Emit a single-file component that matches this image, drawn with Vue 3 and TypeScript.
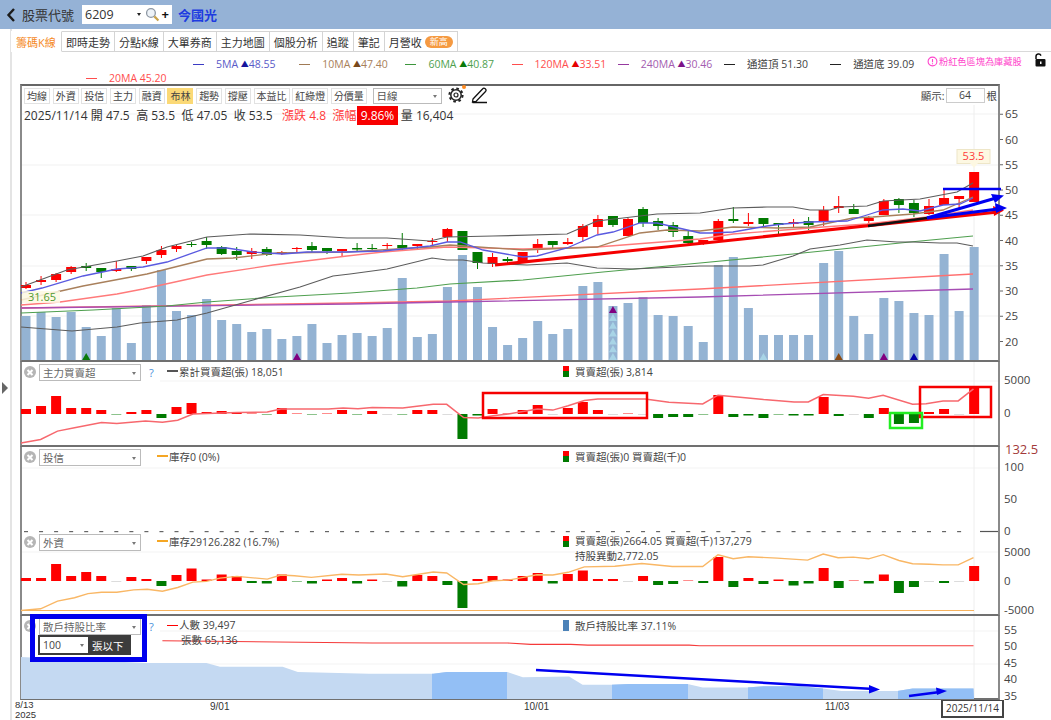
<script setup lang="ts">
type Candle = [string, number, number, number, number];

const cx = (i: number) => 26 + 15.05 * i;
const RED = '#ff0000';
const GREEN = '#007a00';

// colour, body top, body bottom, wick top, wick bottom (page px)
const candles: Candle[] = [
  ['r', 285, 288, 282, 289], ['r', 280, 282, 276, 285], ['r', 274, 280, 273, 282], ['r', 267, 272, 266, 274],
  ['g', 266, 268, 263, 271], ['g', 268, 272, 268, 278], ['r', 269, 271, 261, 272], ['g', 266, 269, 266, 271],
  ['r', 257, 261, 257, 264], ['r', 250, 255, 246, 258], ['r', 246, 249, 245, 252], ['g', 244, 245, 242, 247],
  ['g', 241, 245, 237, 249], ['g', 247, 254, 246, 255], ['g', 251, 255, 247, 260], ['r', 251, 254, 248, 259],
  ['g', 249, 255, 247, 256], ['r', 252, 254, 251, 255], ['r', 248, 249, 247, 253], ['g', 246, 250, 242, 253],
  ['g', 248, 251, 248, 254], ['r', 249, 251, 249, 257], ['g', 248, 249.5, 243, 252], ['g', 248, 249, 244, 252],
  ['r', 245, 246, 243, 251], ['g', 245, 248, 233, 250], ['r', 244, 246, 244, 250], ['r', 241, 242, 238, 246],
  ['r', 229, 237, 228, 242], ['g', 231, 250, 231, 250], ['g', 252, 263, 252, 269], ['r', 257, 264, 253, 267],
  ['g', 259, 261, 257, 265], ['r', 252, 262, 252, 263], ['r', 244, 250, 239, 253], ['g', 241, 245, 241, 248],
  ['r', 242, 244, 238, 245], ['r', 226, 237, 224, 242], ['r', 219, 227, 215, 234], ['g', 216, 225, 216, 227],
  ['r', 219, 236, 218, 236], ['g', 209, 223, 207, 227], ['g', 221, 226, 218, 230], ['g', 225, 232, 222, 237],
  ['g', 236, 243, 230, 244], ['r', 240, 244, 240, 245], ['r', 221, 240, 219, 240], ['g', 219, 221, 207, 223],
  ['r', 222, 224, 213, 226], ['g', 218, 224, 218, 227], ['g', 223, 225, 223, 234], ['r', 222, 224, 219, 227],
  ['g', 221, 225, 217, 230], ['r', 210, 222, 206, 226], ['r', 206, 208, 196, 213], ['g', 209, 214, 204, 214],
  ['r', 218, 221, 216, 223], ['r', 201, 215, 199, 215], ['g', 199, 205, 198, 213], ['g', 203, 213, 200, 217],
  ['r', 206, 214, 199, 215], ['r', 198, 205, 190, 205], ['r', 196, 199, 196, 208], ['r', 172, 202, 172, 202],
];

const volumes = [
  316, 312, 317, 312, 327, 336, 308, 343, 305, 270, 311, 315, 299, 320, 324, 332,
  329, 339, 336, 324, 343, 335, 333, 336, 328, 278, 337, 334, 287, 255, 287, 327,
  345, 338, 321, 334, 329, 286, 282, 306, 303, 297, 315, 316, 326, 342, 265, 257,
  308, 335, 335, 335, 335, 263, 251, 316, 334, 298, 301, 313, 315, 254, 311, 247,
];

const lines = [
  { color: '#ff7070', w: 1.3, d: '21,308 350,303 450,301 700,289 973,274' },
  { color: '#a64db3', w: 1.3, d: '21,308 350,304 450,302 700,297 973,289' },
  { color: '#4f9f4f', w: 1.2, d: '21,313 93,310 167,306 207,302 277,297 350,293 417,288 450,284 523,280 603,272 700,263 793,254 910,242 973,236' },
  { color: '#ff7a7a', w: 1.3, d: '21,305 60,302 117,294 143,289 207,275 273,265 347,256 383,252 447,247 523,249 597,247 700,239 733,234 823,227 867,224 927,217 973,210' },
  { color: '#a9805c', w: 1.3, d: '21,300 83,286 147,274 207,259 233,258 277,253 347,252 430,247 450,245 523,250 597,247 640,233 667,230 700,231 733,227 777,228 810,227 853,218 873,217 913,214 943,210 973,197' },
  { color: '#5a5ae0', w: 1.3, d: '21,293 42,288 83,276 117,269 143,267 167,262 207,248 227,248 253,252 283,254 307,252 347,252 383,251 430,246 447,242 460,242 483,250 523,257 537,256 567,248 597,235 613,232 640,223 657,223 683,229 700,233 710,233 733,232 767,226 783,224 810,222 847,221 867,215 883,210 903,209 920,211 943,205 960,204 973,198' },
  { color: '#5c5c5c', w: 1.2, d: '21,287 67,270 117,261 143,256 167,247 207,237 250,234 300,235 347,238 387,238 430,241 447,237 493,236 567,234 597,221 623,218 657,214 700,213 733,208 767,207 793,207 810,210 830,210 840,207 867,206 883,201 920,199 957,192 973,183' },
  { color: '#5c5c5c', w: 1.2, d: '21,327 72,331 117,327 140,323 177,320 207,313 253,300 300,287 333,276 350,274 387,269 432,258 447,260 463,260 483,263 527,265 567,263 597,268 633,269 700,266 750,266 763,265 793,256 810,249 840,245 867,240 897,242 913,242 940,243 957,243 973,246' },
];

const marks = [
  { x: cx(4), y: 360, c: '#0a7a0a' }, { x: cx(18), y: 360, c: '#800080' }, { x: cx(49), y: 360, c: '#a8d4e6' },
  { x: cx(54), y: 360, c: '#8a4b14' }, { x: cx(57), y: 360, c: '#800080' }, { x: cx(59), y: 360, c: '#0000a8' },
  ...[0, 1, 2, 3, 4, 5].map((n) => ({ x: cx(39), y: 360 - n * 7.8, c: '#a8d4e6' })),
  { x: cx(39), y: 313, c: '#800080' },
];
const tri = (m: { x: number; y: number }) => `${m.x - 4},${m.y} ${m.x + 4},${m.y} ${m.x},${m.y - 7}`;

// net buy/sell bars, px above the zero line; under 1px is drawn as a faint dash
const mainForce = [
  5, 8, 18, 6, 6, 4, -0.5, 2, 4, -4, 7, 11, 2, 3, 2, 0.5, -0.5, 6, 0.5, -0.5, 0.5, 4, -0.5, 3, 0, -0.5, 4, 4, 0, -25, -1.5, 5,
  0.5, 4, 9, 0, 6, 12, 4, 0, 0.5, 0, -4, -3, -3, -0.5, 19, -3, -1.5, -4, -0.5, -1.5, -1.5, 17, -2, 0, -4, 6, -10, -9, 2, 5, 0, 27,
];
const foreign = [
  3, 3, 17, 5, 9, 5, 0, 4, 2, -5, 6, 12.5, 1.5, 6.5, 5, -2, -2.5, 6.5, -0.5, -2.5, 1.5, 3, -2.5, 1.5, 0, -5.5, 6, 5, -4, -27, 2, 5,
  1.5, 5, 8, -2.5, 7, 10.5, 2, 2, 0, 5, -4, -3, 0.5, -2, 24, -6, 3, -3, 1.5, -4.5, -2.5, 13, -7, 0.5, -2.5, 6.5, -12, -6, 0, -2, 0, 15,
];
const bars = (vals: number[], zero: number) =>
  vals.map((v, i) => {
    const h = Math.max(Math.abs(v), 1);
    return {
      x: cx(i) - 5,
      y: v > 0 ? zero - h : zero,
      h,
      fill: v === 0 ? '#dcdcdc' : v > 0 ? RED : GREEN,
      o: v !== 0 && Math.abs(v) < 1 ? 0.45 : 1,
    };
  });
const mainBars = bars(mainForce, 414);
const foreignBars = bars(foreign, 581);

// line points measured off the enlarged crops, converted back to page px
const S = 2.955;
const conv = (pts: number[], ox: number, oy: number) => {
  const out: string[] = [];
  for (let i = 0; i < pts.length; i += 2) out.push(`${(ox + pts[i] / S).toFixed(1)},${(oy + pts[i + 1] / S).toFixed(1)}`);
  return out.join(' ');
};
const cumLine =
  conv([62, 245, 120, 235, 170, 210, 220, 200, 300, 185, 345, 188, 430, 180, 480, 184, 525, 178, 570, 160, 700, 155, 790, 154, 830, 145, 970, 145, 1014, 142, 1058, 144, 1100, 140, 1190, 142, 1280, 131, 1320, 131, 1370, 170, 1413, 171, 1457, 165, 1502, 160], 0, 360) +
  ' ' +
  conv([52, 145, 97, 148, 142, 135, 190, 120, 230, 115, 370, 115, 440, 125, 540, 130, 585, 104, 650, 110, 720, 117, 810, 124, 852, 124, 896, 102, 985, 107, 1030, 113, 1073, 104, 1160, 131, 1200, 129, 1250, 121, 1295, 121, 1340, 85], 520, 360);
const holdLine =
  conv([62, 238, 120, 233, 170, 210, 220, 200, 260, 188, 300, 184, 345, 184, 395, 177, 435, 175, 480, 181, 525, 170, 570, 154, 610, 152, 650, 142, 700, 137, 790, 145, 830, 133, 870, 135, 920, 140, 1010, 131, 1060, 133, 1140, 130, 1190, 138, 1280, 124, 1320, 127, 1370, 161, 1413, 159, 1457, 150, 1502, 148], 0, 530) +
  ' ' +
  conv([10, 140, 50, 132, 97, 133, 142, 125, 190, 109, 280, 107, 360, 99, 450, 108, 540, 108, 585, 73, 630, 85, 675, 79, 760, 83, 850, 89, 896, 71, 940, 82, 985, 80, 1030, 85, 1073, 73, 1120, 90, 1160, 100, 1210, 101, 1250, 103, 1295, 103, 1340, 82], 520, 530);
const peopleLine =
  conv([480, 327, 1100, 334, 1500, 334, 1568, 338], 0, 530) + ' ' + conv([150, 338, 200, 340, 500, 340, 530, 342, 1340, 342], 520, 530);
const areaTop =
  conv([62, 375, 430, 393, 610, 393, 650, 404, 835, 404, 880, 420, 1090, 425, 1280, 425, 1320, 420, 1500, 420, 1545, 435], 0, 530) +
  ' ' +
  conv([145, 433, 185, 457, 270, 457, 320, 455, 495, 455, 540, 465, 670, 465, 720, 462, 830, 462, 895, 468, 950, 476, 1115, 476, 1160, 468, 1340, 468], 520, 530);
const areaPts = `21,699 ${areaTop} 974,699`;
const areaBands = [[432, 75], [612, 76], [748, 75], [898, 76]];

const tabs = ['即時走勢', '分點K線', '大單券商', '主力地圖', '個股分析', '追蹤', '筆記'];
const tools = ['均線', '外資', '投信', '主力', '融資', '布林', '趨勢', '撐壓', '本益比', '紅綠燈', '分價量'];

const legend = [
  { label: '5MA', up: true, val: '48.55', dash: '#3b3bc4', text: '#5a5ac8', arrow: '#15159c' },
  { label: '10MA', up: true, val: '47.40', dash: '#a07a55', text: '#a8805a', arrow: '#7a4a1c' },
  { label: '60MA', up: true, val: '40.87', dash: '#3c963c', text: '#4f9f4f', arrow: '#0a7a0a' },
  { label: '120MA', up: true, val: '33.51', dash: '#ff4d4d', text: '#ff4d4d', arrow: '#e60000' },
  { label: '240MA', up: true, val: '30.46', dash: '#96399f', text: '#a45cb0', arrow: '#7d1088' },
  { label: '通道頂', up: false, val: '51.30', dash: '#222', text: '#444', arrow: '' },
  { label: '通道底', up: false, val: '39.09', dash: '#222', text: '#444', arrow: '' },
];

const mainTicks = [65, 60, 55, 50, 45, 40, 35, 30, 25, 20];
const priceY = (p: number) => 190 + (50 - p) * 5.05;
const ticks1 = [{ t: '5000', y: 380 }, { t: '0', y: 413 }];
const ticks2 = [{ t: '100', y: 467 }, { t: '50', y: 499 }, { t: '0', y: 531 }];
const ticks3 = [{ t: '5000', y: 552 }, { t: '0', y: 581 }, { t: '-5000', y: 610 }];
const ticks4 = [{ t: '55', y: 630 }, { t: '50', y: 646 }, { t: '45', y: 663 }, { t: '40', y: 679 }, { t: '35', y: 696 }];
</script>

<template>
  <div class="page">
    <header class="topbar">
      <svg class="back" width="10" height="16" viewBox="0 0 10 16"><path d="M8 2 L2.5 8 L8 14" fill="none" stroke="#1c1c1c" stroke-width="2.4" /></svg>
      <span class="code-label">股票代號</span>
      <div class="code-box">
        <span class="code-val">6209</span>
        <i class="caret dark"></i>
        <svg width="15" height="15" viewBox="0 0 15 15">
          <circle cx="6" cy="6" r="4.4" fill="#eef3f8" stroke="#8d97a3" stroke-width="1.3" />
          <path d="M9.4 9.4 L13.5 13.5" stroke="#c9a24a" stroke-width="2.2" />
        </svg>
        <b class="plus">+</b>
      </div>
      <span class="stock-name">今國光</span>
    </header>

    <div class="body">
      <nav class="tabs">
        <span class="tab active">籌碼K線</span>
        <span v-for="t in tabs" :key="t" class="tab">{{ t }}</span>
        <span class="tab">月營收<em class="badge">新高</em></span>
      </nav>

      <div class="legend">
        <div class="legend-row">
          <span v-for="l in legend" :key="l.label" class="legend-item" :style="{ color: l.text }">
            <i class="dash" :style="{ background: l.dash }"></i>{{ l.label }}
            <span v-if="l.up" :style="{ color: l.arrow }" class="up">▲</span>{{ l.val }}
          </span>
        </div>
        <div class="legend-row second">
          <span class="legend-item" style="color: #ff4d4d"><i class="dash" style="background: #ff4d4d"></i>20MA 45.20</span>
        </div>
        <div class="note">
          <svg width="11" height="11" viewBox="0 0 12 12">
            <circle cx="6" cy="6" r="4.8" fill="none" stroke="#ff44cc" stroke-width="1.2" />
            <path d="M6 3.2 V6.8 M6 8 V9" stroke="#ff44cc" stroke-width="1.2" />
          </svg>
          粉紅色區塊為庫藏股
        </div>
        <svg class="lock" width="14" height="14" viewBox="0 0 14 14">
          <path d="M3 6 V3.6 A2.6 2.6 0 0 1 8 2.6" fill="none" stroke="#111" stroke-width="1.5" />
          <rect x="2.5" y="6" width="10" height="7.5" rx="1" fill="#111" />
          <rect x="7" y="8.5" width="1.5" height="2.5" fill="#fff" />
        </svg>
      </div>

      <section class="charts">
        <div class="row">
          <div class="panel main">
            <svg class="plot" width="976" height="274" viewBox="22 86 976 274">
              <line v-for="y in [114, 165, 215, 266, 316]" :key="y" x1="22" x2="998" :y1="y" :y2="y" stroke="#f1f1f1" />
              <line x1="974" x2="974" y1="105" y2="360" stroke="#eee" />
              <rect v-for="(v, i) in volumes" :key="i" :x="cx(i) - 4.5" :y="v" width="9" :height="360 - v" fill="#94b3d3" />
              <polygon v-for="(m, i) in marks" :key="i" :points="tri(m)" :fill="m.c" />
              <g v-for="(c, i) in candles" :key="i">
                <line :x1="cx(i)" :x2="cx(i)" :y1="c[3]" :y2="c[4]" :stroke="c[0] === 'r' ? RED : GREEN" />
                <rect :x="cx(i) - 5" :y="c[1]" width="10" :height="c[2] - c[1]" :fill="c[0] === 'r' ? RED : GREEN" />
              </g>
              <polyline v-for="l in lines" :key="l.d" :points="l.d" fill="none" :stroke="l.color" :stroke-width="l.w" />

              <line x1="495" y1="265" x2="998" y2="212" stroke="#f50000" stroke-width="3" />
              <polygon points="1004,210.5 993,206 994,216" fill="#f50000" />
              <line x1="868" y1="226" x2="927" y2="218" stroke="#111" stroke-width="2.5" />
              <line x1="943" y1="189" x2="1001" y2="189" stroke="#0000f0" stroke-width="2.5" />
              <line x1="927" y1="218" x2="996" y2="198" stroke="#0000f0" stroke-width="3" />
              <polygon points="1004,195.5 991,194 995,203" fill="#0000f0" />
              <line x1="927" y1="218" x2="998" y2="209" stroke="#0000f0" stroke-width="3" />
              <polygon points="1007,208 995,203 996,213" fill="#0000f0" />

              <g class="tag">
                <rect x="957" y="149.5" width="33" height="14" fill="#fdf8e2" stroke="#eee6c8" />
                <polygon points="970,163 978,163 974,168" fill="#fdf8e2" />
                <text x="973.5" y="160" text-anchor="middle" fill="#ff3b3b">53.5</text>
                <rect x="22" y="291" width="38" height="12" fill="#fdf8e2" opacity="0.85" />
                <text x="28" y="300.5" fill="#4f9a2e">31.65</text>
              </g>
            </svg>

            <div class="overlay">
              <div class="toolbar">
                <span v-for="t in tools" :key="t" class="tool" :class="{ on: t === '布林' }">{{ t }}</span>
                <div class="select period">日線<i class="caret"></i></div>
                <svg class="gear" width="20" height="20" viewBox="0 0 20 20">
                  <circle cx="9" cy="11" r="5.2" fill="none" stroke="#222" stroke-width="1.5" />
                  <circle cx="9" cy="11" r="6.6" fill="none" stroke="#222" stroke-width="2" stroke-dasharray="2.6 2.6" />
                  <circle cx="9" cy="11" r="2" fill="none" stroke="#222" stroke-width="1.2" />
                  <circle cx="17" cy="3" r="2" fill="#ff8a1e" />
                </svg>
                <svg class="pen" width="17" height="17" viewBox="0 0 17 17">
                  <path d="M2 12 L11.5 2 A1.6 1.6 0 0 1 14.5 4.5 L5 14.5 L1.5 15 Z M1.5 15.5 H16" fill="none" stroke="#111" stroke-width="1.3" />
                </svg>
                <div class="show">
                  顯示:<span class="show-box">64</span>根
                </div>
              </div>
              <div class="info">
                <span>2025/11/14 開 47.5</span>
                <span>高 53.5</span>
                <span>低 47.05</span>
                <span>收 53.5</span>
                <span class="rise first">漲跌 4.8</span>
                <span class="rise">漲幅</span>
                <span class="pct">9.86%</span>
                <span class="vol">量 16,404</span>
              </div>
            </div>
          </div>
          <svg class="axis" width="51" height="278" viewBox="1000 84 51 278">
            <g v-for="p in mainTicks" :key="p">
              <line x1="1000" x2="1003" :y1="priceY(p)" :y2="priceY(p)" stroke="#666" />
              <text x="1005" :y="priceY(p) + 4">{{ p }}</text>
            </g>
          </svg>
        </div>

        <div class="row">
          <div class="panel sub h85">
            <svg class="plot" width="976" height="83" viewBox="22 362 976 83">
              <line x1="160" x2="998" y1="381" y2="381" stroke="#f3f3f3" />
              <line x1="974" x2="974" y1="362" y2="445" stroke="#eee" />
              <rect v-for="(b, i) in mainBars" :key="i" :x="b.x" :y="b.y" width="10" :height="b.h" :fill="b.fill" :opacity="b.o" />
              <polyline :points="cumLine" fill="none" stroke="#f7686e" stroke-width="1.5" />
              <rect x="483" y="393" width="164" height="25" fill="none" stroke="#f50000" stroke-width="2.5" />
              <rect x="920" y="387" width="71" height="30" fill="none" stroke="#f50000" stroke-width="2.5" />
              <rect x="890" y="413" width="32" height="15" fill="none" stroke="#22ee22" stroke-width="2.5" />
            </svg>
            <div class="overlay head">
              <div class="ctrl">
                <i class="close"></i>
                <div class="select wide">主力買賣超<i class="caret"></i></div>
                <span class="help">?</span>
              </div>
              <div class="lg"><i class="ln" style="background: #555"></i>累計買賣超(張) 18,051</div>
              <div class="lg"><i class="chip"></i>買賣超(張) 3,814</div>
            </div>
          </div>
          <svg class="axis" width="51" height="85" viewBox="1000 362 51 85">
            <g v-for="t in ticks1" :key="t.t"><text x="1004" :y="t.y + 4">{{ t.t }}</text></g>
          </svg>
        </div>

        <div class="row">
          <div class="panel sub h85 open">
            <svg class="plot" width="976" height="85" viewBox="22 447 976 85">
              <line x1="22" x2="998" y1="468" y2="468" stroke="#f3f3f3" />
              <line x1="974" x2="974" y1="447" y2="532" stroke="#eee" />
              <rect v-for="i in 63" :key="i" :x="cx(i - 1) - 2" y="531" width="4" height="1.2" fill="#666" />
              <line x1="980" x2="998" y1="531.5" y2="531.5" stroke="#555" stroke-width="1.2" />
            </svg>
            <div class="overlay head">
              <div class="ctrl">
                <i class="close"></i>
                <div class="select wide">投信<i class="caret"></i></div>
              </div>
              <div class="lg narrow"><i class="ln" style="background: #f5a623"></i>庫存0 (0%)</div>
              <div class="lg"><i class="chip"></i>買賣超(張)0 買賣超(千)0</div>
            </div>
          </div>
          <svg class="axis" width="51" height="85" viewBox="1000 447 51 85">
            <text x="1005" y="454" class="peak">132.5</text>
            <g v-for="t in ticks2" :key="t.t"><text x="1004" :y="t.y + 4">{{ t.t }}</text></g>
          </svg>
        </div>

        <div class="row">
          <div class="panel sub h84">
            <svg class="plot" width="976" height="82" viewBox="22 532 976 82">
              <line x1="22" x2="998" y1="552" y2="552" stroke="#f3f3f3" />
              <line x1="974" x2="974" y1="532" y2="614" stroke="#eee" />
              <rect v-for="(b, i) in foreignBars" :key="i" :x="b.x" :y="b.y" width="10" :height="b.h" :fill="b.fill" :opacity="b.o" />
              <polyline :points="holdLine" fill="none" stroke="#f9b765" stroke-width="1.4" />
              <line x1="22" x2="974" y1="610.5" y2="610.5" stroke="#f7b35e" stroke-width="1.2" />
            </svg>
            <div class="overlay head">
              <div class="ctrl">
                <i class="close"></i>
                <div class="select wide">外資<i class="caret"></i></div>
              </div>
              <div class="lg narrow"><i class="ln" style="background: #f5a623"></i>庫存29126.282 (16.7%)</div>
              <div class="lg two">
                <span><i class="chip"></i>買賣超(張)2664.05 買賣超(千)137,279</span>
                <span class="indent">持股異動2,772.05</span>
              </div>
            </div>
          </div>
          <svg class="axis" width="51" height="84" viewBox="1000 532 51 84">
            <g v-for="t in ticks3" :key="t.t"><text x="1004" :y="t.y + 4">{{ t.t }}</text></g>
          </svg>
        </div>

        <div class="row">
          <div class="panel sub h84">
            <svg class="plot" width="976" height="82" viewBox="22 616 976 82">
              <defs>
                <clipPath id="retail"><polygon :points="areaPts" /></clipPath>
              </defs>
              <line x1="160" x2="998" y1="631" y2="631" stroke="#f3f3f3" />
              <line x1="160" x2="998" y1="664" y2="664" stroke="#f3f3f3" />
              <line x1="974" x2="974" y1="616" y2="698" stroke="#eee" />
              <polygon :points="areaPts" fill="#c4d9f2" />
              <g clip-path="url(#retail)">
                <rect v-for="b in areaBands" :key="b[0]" :x="b[0]" y="640" :width="b[1]" height="60" fill="#93bff5" />
              </g>
              <polyline :points="peopleLine" fill="none" stroke="#f53a3a" stroke-width="1.1" />
              <line x1="536" y1="670" x2="874" y2="689" stroke="#0000f0" stroke-width="2.5" />
              <polygon points="880,689.5 869,685 869,693.5" fill="#0000f0" />
              <line x1="909" y1="696" x2="940" y2="692" stroke="#0000f0" stroke-width="2.5" />
              <polygon points="947,691 936,687.5 937,695" fill="#0000f0" />
            </svg>
            <div class="overlay head">
              <div class="ctrl">
                <i class="close"></i>
                <div class="select wide">散戶持股比率<i class="caret"></i></div>
                <span class="help">?</span>
              </div>
              <div class="lg two">
                <span><i class="ln" style="background: #f00"></i>人數 39,497</span>
                <span class="indent-s">張數 65,136</span>
              </div>
              <div class="lg"><i class="chip blue"></i>散戶持股比率 37.11%</div>
            </div>
            <div class="callout">
              <div class="sub-filter">
                <div class="select small">100<i class="caret"></i></div>
                <span>張以下</span>
              </div>
            </div>
          </div>
          <svg class="axis" width="51" height="84" viewBox="1000 616 51 84">
            <g v-for="t in ticks4" :key="t.t"><text x="1004" :y="t.y + 4">{{ t.t }}</text></g>
          </svg>
        </div>

        <div class="dates">
          <span class="date d0">8/13<br />2025</span>
          <span class="date d1">9/01</span>
          <span class="date d2">10/01</span>
          <span class="date d3">11/03</span>
          <span class="cursor-date">2025/11/14</span>
        </div>
      </section>
    </div>

    <i class="side-arrow"></i>
  </div>
</template>

<style>
html,
body {
  margin: 0;
  background: #fff;
}
</style>

<style scoped>
.page {
  position: relative;
  width: 1051px;
  height: 720px;
  overflow: hidden;
  background: #fff;
  font-family: 'Open Sans', 'Noto Sans CJK TC', sans-serif;
  color: #333;
}
.topbar {
  display: flex;
  align-items: center;
  height: 29px;
  background: #95b2d6;
  padding-left: 6px;
}
.back {
  margin-right: 6px;
}
.code-label {
  font-size: 13px;
  color: #333;
  width: 60px;
}
.code-box {
  display: flex;
  align-items: center;
  width: 90px;
  height: 19px;
  background: #fff;
  box-sizing: border-box;
  padding: 0 3px;
  font-size: 12.5px;
}
.code-val {
  width: 52px;
}
.code-box .caret {
  margin-right: 4px;
}
.plus {
  margin-left: 2px;
  font-size: 13px;
  line-height: 1;
  color: #111;
}
.stock-name {
  margin-left: 6px;
  font-size: 13px;
  font-weight: 700;
  color: #1d3be0;
}
.caret {
  display: inline-block;
  width: 0;
  height: 0;
  border: 2.5px solid transparent;
  border-top: 3px solid #777;
  border-bottom: 0;
}
.caret.dark {
  border-top-color: #222;
}

.body {
  margin-left: 10px;
  border-left: 2px solid #e4e4e4;
  height: 691px;
}
.tabs {
  display: flex;
  margin-left: -1px;
  padding-top: 2px;
  height: 20px;
  border-bottom: 1px solid #d9d9d9;
}
.tab {
  display: flex;
  align-items: center;
  box-sizing: border-box;
  height: 21px;
  padding: 0 4px;
  font-size: 11px;
  color: #333;
  border: 1px solid #d4d4d4;
  border-left: 0;
  background: #fff;
}
.tab.active {
  color: #f58a1f;
  border-left: 1px solid #fff;
  border-bottom-color: #fff;
  border-top-color: #fff;
  width: 51px;
}
.badge {
  margin-left: 3px;
  padding: 0 5px;
  height: 12px;
  line-height: 12px;
  border-radius: 6px;
  background: #f59a42;
  color: #fff;
  font-size: 9px;
  font-style: normal;
}

.legend {
  position: relative;
  height: 32px;
  font-size: 10.5px;
}
.legend-row {
  display: flex;
  height: 14px;
  padding-top: 5px;
  padding-left: 181px;
  line-height: 14px;
}
.legend-row.second {
  padding-top: 0;
  padding-left: 74px;
}
.legend-item {
  display: flex;
  align-items: center;
  width: 106.2px;
  white-space: pre;
  flex: none;
}
.dash {
  width: 11px;
  height: 1px;
  margin-right: 12px;
  flex: none;
}
.up {
  font-size: 8px;
}
.note {
  position: absolute;
  left: 915px;
  top: 2px;
  display: flex;
  align-items: center;
  gap: 1px;
  font-size: 9.2px;
  color: #ff44cc;
  white-space: nowrap;
}
.lock {
  position: absolute;
  left: 1021px;
  top: 1px;
}

.charts {
  margin-left: 8px;
  width: 1031px;
}
.row {
  display: flex;
}
.panel {
  position: relative;
  box-sizing: border-box;
  width: 980px;
  border-left: 2px solid #8a8a8a;
  border-right: 2px solid #8a8a8a;
  border-bottom: 2px solid #707070;
}
.panel.main {
  height: 278px;
  border-top: 2px solid #666;
}
.panel.h85 {
  height: 85px;
}
.panel.h84 {
  height: 84px;
}
.panel.open {
  border-bottom: 0;
}
.plot {
  display: block;
  overflow: visible;
}
.axis {
  display: block;
  flex: none;
  overflow: visible;
}
.axis text {
  font-size: 11.5px;
  fill: #444;
}
.axis .peak {
  font-size: 13px;
  fill: #a33a3a;
}
.tag text {
  font-size: 11px;
}

.overlay {
  position: absolute;
  left: 0;
  right: 0;
  top: 0;
}
.toolbar {
  display: flex;
  align-items: center;
  height: 17px;
  margin-top: 1px;
  padding-left: 2px;
  gap: 2.7px;
}
.tool {
  box-sizing: border-box;
  height: 16px;
  padding: 0 2px;
  border: 1px solid #e2e2e2;
  font-size: 10px;
  line-height: 14px;
  color: #444;
  background: #fff;
  white-space: nowrap;
}
.tool.on {
  background: #fbd976;
  border-color: #fbd976;
}
.select {
  position: relative;
  box-sizing: border-box;
  display: flex;
  align-items: center;
  border: 1px solid #bbb;
  background: #fff;
  color: #555;
  font-size: 10.5px;
  padding-left: 3px;
}
.select .caret {
  position: absolute;
  right: 4px;
  top: 50%;
  margin-top: -1px;
}
.select.period {
  width: 69px;
  height: 16px;
  margin-left: 3px;
  margin-right: 3px;
}
.gear {
  margin-top: -3px;
}
.pen {
  margin-left: 1px;
}
.show {
  display: flex;
  align-items: center;
  margin-left: auto;
  padding-right: 1px;
  font-size: 10.5px;
  color: #444;
}
.show-box {
  box-sizing: border-box;
  width: 39px;
  height: 15px;
  margin: 0 2px 0 1px;
  border: 1px solid #ccc;
  text-align: center;
  line-height: 13px;
}
.info {
  display: flex;
  align-items: center;
  height: 20px;
  margin-top: 1px;
  padding-left: 2px;
  gap: 6.5px;
  font-size: 12px;
  color: #333;
  white-space: nowrap;
}
.rise {
  color: #ff3b3b;
}
.rise.first {
  margin-left: 3px;
}
.pct {
  margin-left: -6.5px;
  padding: 0 4px;
  line-height: 19px;
  background: #f80000;
  color: #fff;
}
.vol {
  margin-left: -4px;
}

.head {
  display: grid;
  grid-template-columns: 145px 393px 1fr;
  padding-top: 2px;
}
.ctrl {
  display: flex;
  align-items: flex-start;
}
.close {
  position: relative;
  flex: none;
  width: 12px;
  height: 12px;
  margin: 2px 3px 0 2px;
  border-radius: 50%;
  background: #b5b5b5;
}
.close::before,
.close::after {
  content: '';
  position: absolute;
  left: 5px;
  top: 2.5px;
  width: 2px;
  height: 7px;
  background: #fff;
  transform: rotate(45deg);
}
.close::after {
  transform: rotate(-45deg);
}
.select.wide {
  width: 102px;
  height: 17px;
  color: #666;
}
.help {
  margin-left: 8px;
  font-size: 11px;
  color: #4a90d9;
  line-height: 18px;
}
.lg {
  display: flex;
  align-items: center;
  height: 14px;
  font-size: 10.5px;
  color: #444;
  white-space: nowrap;
}
.lg.narrow {
  margin-left: -10px;
}
.lg.two {
  display: block;
  height: auto;
  line-height: 15px;
}
.lg.two span {
  display: flex;
  align-items: center;
}
.ln {
  width: 11px;
  height: 1.5px;
  margin-right: 1px;
}
.chip {
  width: 6px;
  height: 11px;
  margin: 0 6px 0 3px;
  flex: none;
  background: linear-gradient(#f00 0 45%, #007a00 45%);
}
.chip.blue {
  background: #4c82b8;
}
.indent {
  padding-left: 15px;
}
.indent-s {
  padding-left: 14px;
}
.callout {
  position: absolute;
  left: 8px;
  top: -2px;
  box-sizing: border-box;
  width: 117px;
  height: 48px;
  border: 5px solid #0000ee;
  padding-top: 16px;
  pointer-events: none;
}
.sub-filter {
  display: flex;
  align-items: center;
  width: 93px;
  height: 20px;
  margin-left: 3px;
  padding-left: 2px;
  box-sizing: border-box;
  background: #3c3c3c;
  color: #fff;
  font-size: 10.5px;
  gap: 4px;
}
.select.small {
  width: 48px;
  height: 16px;
  border: 0;
  color: #444;
}

.dates {
  position: relative;
  height: 20px;
  font-size: 10px;
  color: #333;
}
.date {
  position: absolute;
  top: 2px;
  line-height: 10px;
  font-family: 'Liberation Sans', sans-serif;
}
.d0 {
  top: 0;
  left: -5px;
  font-size: 9.5px;
}
.d1 {
  left: 190px;
}
.d2 {
  left: 504px;
}
.d3 {
  left: 805px;
}
.cursor-date {
  position: absolute;
  left: 921px;
  top: 0;
  box-sizing: border-box;
  width: 63px;
  height: 18px;
  border: 2px solid #444;
  border-top-width: 1px;
  background: #fff;
  text-align: center;
  line-height: 15px;
}
.side-arrow {
  position: absolute;
  left: 2px;
  top: 382px;
  width: 0;
  height: 0;
  border-left: 6px solid #666;
  border-top: 6px solid transparent;
  border-bottom: 6px solid transparent;
}
</style>
